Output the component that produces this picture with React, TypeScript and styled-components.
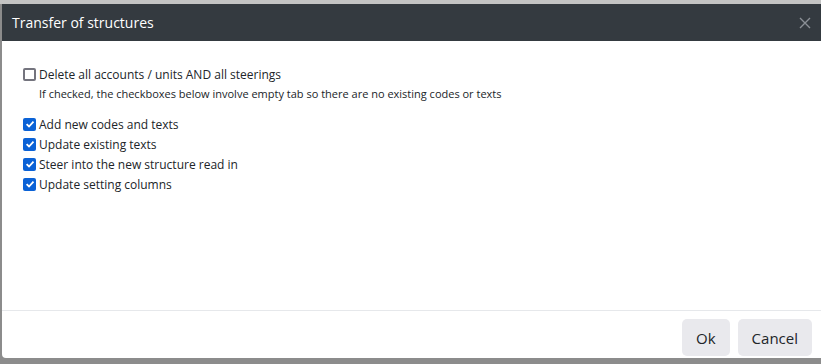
import React, { FC, useState } from 'react'
import styled, { createGlobalStyle } from 'styled-components'

const GlobalStyle = createGlobalStyle`
  html, body {
    margin: 0;
    padding: 0;
    background: #9a9a9a;
    font-family: "Open Sans", "Liberation Sans", sans-serif;
  }
`

const Backdrop = styled.div`
  display: flex;
  width: 821px;
  height: 364px;
  padding: 4px 0 6px 2px;
  box-sizing: border-box;
  background: linear-gradient(#c4c4c4 0 4px, #8c8c8c 4px);
`

const Dialog = styled.div`
  display: flex;
  flex-direction: column;
  flex: 1;
  background: #fff;
  border-bottom-left-radius: 4px;
  overflow: hidden;
`

const Header = styled.div`
  display: flex;
  align-items: center;
  justify-content: space-between;
  height: 37px;
  padding: 0 10px 0 10px;
  background: #343a40;
  color: #fff;
  font-size: 14px;
`

const CloseButton = styled.button`
  display: flex;
  align-items: center;
  justify-content: center;
  width: 12px;
  height: 12px;
  padding: 0;
  border: 0;
  background: transparent;
  cursor: pointer;
`

const Body = styled.div`
  flex: 1;
  padding: 23px 21px 0 20px;
  color: #212529;
`

const Row = styled.label`
  display: flex;
  align-items: center;
  gap: 3px;
  height: 20px;
  font-size: 12px;
  cursor: pointer;
`

const Box = styled.span<{ checked: boolean }>`
  display: flex;
  align-items: center;
  justify-content: center;
  width: 13px;
  height: 13px;
  margin-left: 1px;
  box-sizing: border-box;
  border-radius: 2px;
  border: ${p => (p.checked ? 'none' : '2px solid #74747e')};
  background: ${p => (p.checked ? '#0b62d6' : '#fff')};
`

const Hint = styled.div`
  margin: 2px 0 13px 17px;
  font-size: 11px;
  color: #212529;
`

const Footer = styled.div`
  display: flex;
  justify-content: flex-end;
  gap: 8px;
  padding: 8px 9px 2px 0;
  border-top: 1px solid #e6e8eb;
`

const Button = styled.button`
  height: 37px;
  padding: 0 14px;
  border: 0;
  border-radius: 5px;
  background: #e9e9ed;
  color: #212529;
  font-family: inherit;
  font-size: 15px;
  cursor: pointer;
`

const options = [
  'Add new codes and texts',
  'Update existing texts',
  'Steer into the new structure read in',
  'Update setting columns',
]

const Check: FC<{ checked: boolean; label: string; onToggle: () => void }> = ({ checked, label, onToggle }) => (
  <Row onClick={onToggle}>
    <Box checked={checked}>
      {checked && (
        <svg width="10" height="10" viewBox="0 0 10 10">
          <path d="M1.6 5.2 L4 7.5 L8.5 2.6" fill="none" stroke="#fff" strokeWidth="1.8" />
        </svg>
      )}
    </Box>
    {label}
  </Row>
)

const App: FC = () => {
  const [deleteAll, setDeleteAll] = useState(false)
  const [checked, setChecked] = useState<boolean[]>([true, true, true, true])

  return (
    <>
      <GlobalStyle />
      <Backdrop>
        <Dialog>
          <Header>
            <span>Transfer of structures</span>
            <CloseButton aria-label="Close">
              <svg width="12" height="12" viewBox="0 0 12 12">
                <path d="M1 1 L11 11 M11 1 L1 11" stroke="#8b9096" strokeWidth="1.4" />
              </svg>
            </CloseButton>
          </Header>
          <Body>
            <Check checked={deleteAll} label="Delete all accounts / units AND all steerings" onToggle={() => setDeleteAll(!deleteAll)} />
            <Hint>If checked, the checkboxes below involve empty tab so there are no existing codes or texts</Hint>
            {options.map((o, i) => (
              <Check
                key={o}
                checked={checked[i]}
                label={o}
                onToggle={() => setChecked(checked.map((c, j) => (j === i ? !c : c)))}
              />
            ))}
          </Body>
          <Footer>
            <Button>Ok</Button>
            <Button>Cancel</Button>
          </Footer>
        </Dialog>
      </Backdrop>
    </>
  )
}

export default App
